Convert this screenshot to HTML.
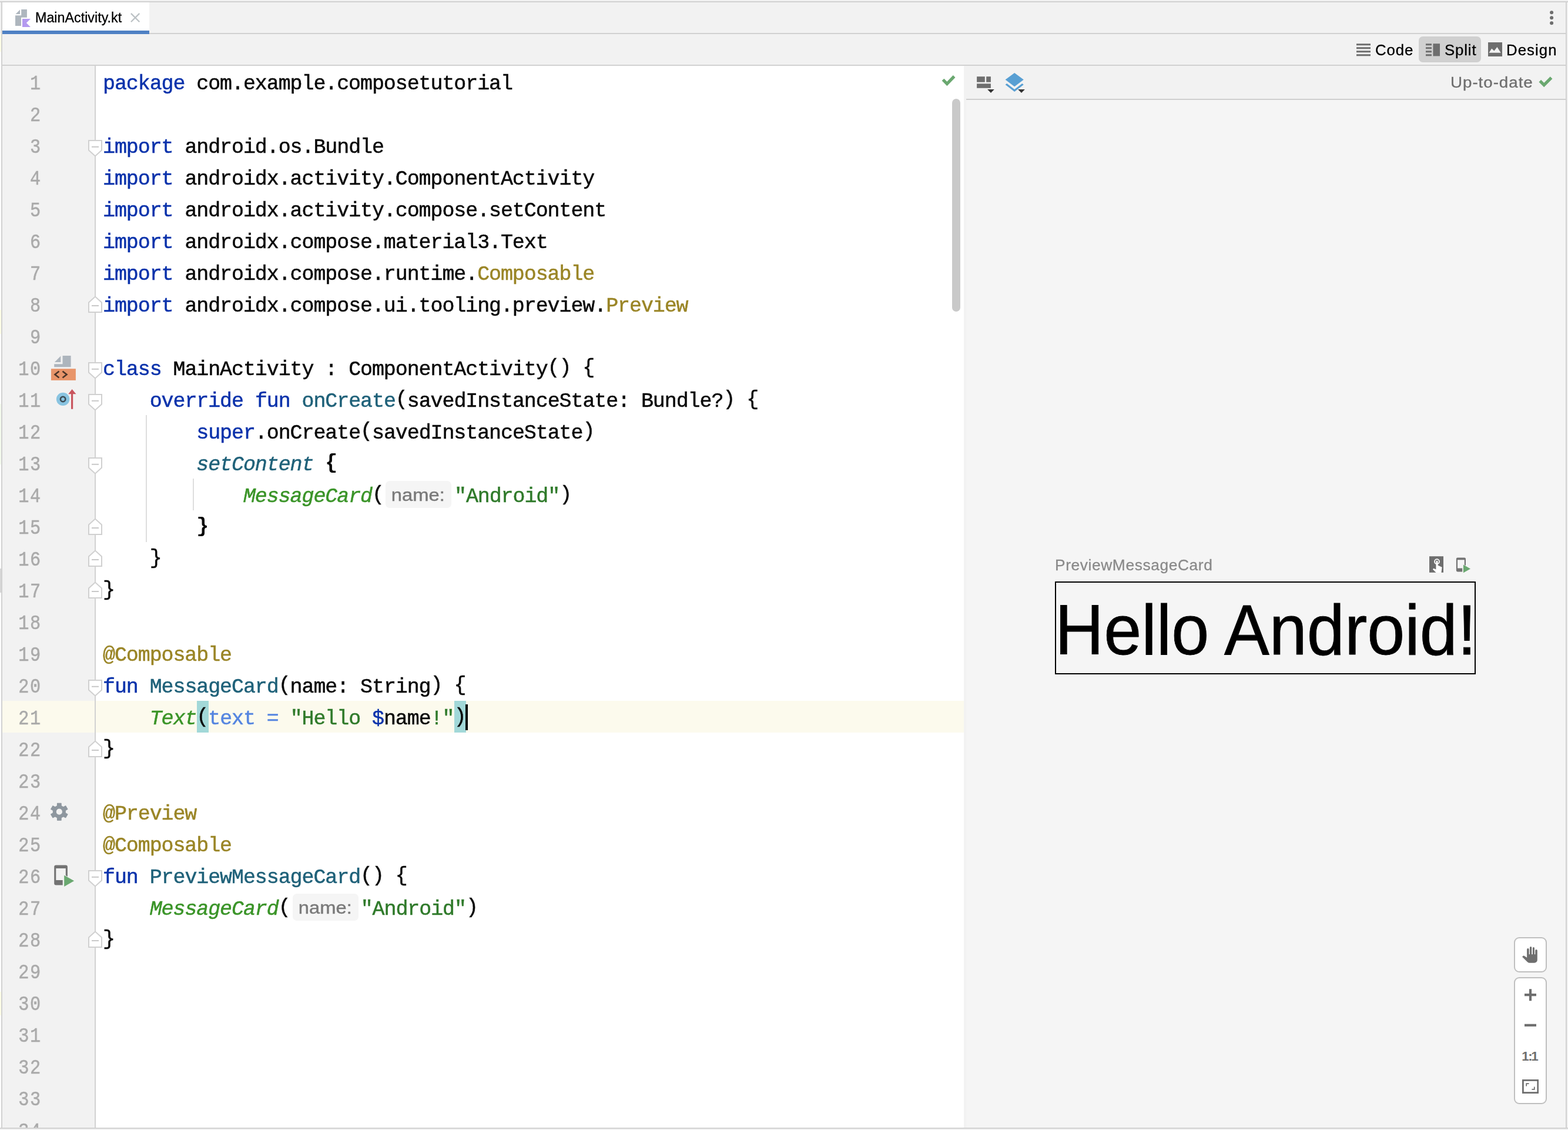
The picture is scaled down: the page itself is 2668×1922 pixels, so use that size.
<!DOCTYPE html>
<html lang="en"><head><meta charset="utf-8"><title>MainActivity.kt</title>
<style>
*{box-sizing:border-box}
html,body{margin:0;padding:0}
html{width:2668px;height:1922px;overflow:hidden;background:#f2f2f2}
body{width:2668px;height:1922px;position:relative;overflow:hidden;background:#f2f2f2;font-family:"Liberation Sans",sans-serif;color:#000}
#root{position:absolute;left:0;top:0;width:2668px;height:1922px;overflow:hidden;background:#f2f2f2}
.abs{position:absolute}
.ln{position:absolute;left:0;width:71px;height:54px;line-height:54px;text-align:right;font-family:"Liberation Mono",monospace;font-size:35.0px;letter-spacing:2.148px;transform:scaleX(0.86);transform-origin:100% 50%;color:#a9a9a9;white-space:pre;-webkit-text-stroke:0.5px currentColor}
.cl{position:absolute;left:175.45px;height:54px;line-height:54px;font-family:"Liberation Mono",monospace;font-size:35.0px;letter-spacing:-1.093px;color:#080808;white-space:pre;-webkit-text-stroke:0.5px currentColor}
.cl,.ln,.ui,.hb{will-change:transform}
.k{color:#0a32ab}
.f{color:#1f6179}
.a{color:#9a8526}
.s{color:#2f7a2a}
.c{color:#3a9428}
.n{color:#5585e0}
.i{font-style:italic}
.b{font-weight:bold;-webkit-text-stroke:0}
.m{}
.p{position:relative;top:-2.6px}
.hint{display:inline-block;width:120.1px;height:54px;vertical-align:top;position:relative;letter-spacing:0;-webkit-text-stroke:0}
.hbg{position:absolute;left:2.9px;top:0.21px;width:111.8px;height:46px;border-radius:7px;background:#f5f5f5}
.hb{position:absolute;left:2.9px;top:1.01px;width:111.8px;height:46px;color:#7a7a7a;font-family:"Liberation Sans",sans-serif;font-size:29.9px;line-height:46px;text-align:center;letter-spacing:0;-webkit-text-stroke:0.45px currentColor;transform:translateX(-0.6px) scaleX(1.095)}
.ui{position:absolute;white-space:pre;font-family:"Liberation Sans",sans-serif;-webkit-text-stroke:0.3px currentColor}
</style></head>
<body>
<div id="root">
<!-- tab bar -->
<div class="abs" style="left:4px;top:4px;width:2660px;height:52px;background:#f2f2f2"></div>
<div class="abs" style="left:4px;top:56px;width:2660px;height:2px;background:#d1d1d1"></div>
<div class="abs" style="left:4px;top:4px;width:250px;height:48px;background:#fff"></div>
<div class="abs" style="left:4px;top:52px;width:250px;height:6px;background:#4f81c4"></div>
<!-- toolbar -->
<div class="abs" style="left:4px;top:110px;width:2660px;height:2px;background:#d1d1d1"></div>
<!-- editor -->
<div class="abs" style="left:163px;top:112px;width:1477px;height:1806px;background:#fff"></div>
<div class="abs" style="left:4px;top:1192px;width:1636px;height:54px;background:#fcfaed"></div>
<div class="abs" style="left:161px;top:112px;width:2px;height:1806px;background:#d2d2d2"></div>
<!-- preview -->
<div class="abs" style="left:1644px;top:170px;width:1020px;height:1748px;background:#f5f5f5"></div>
<div class="abs" style="left:1644px;top:168px;width:1020px;height:2px;background:#cfcfcf"></div>
<div class="abs" style="left:248px;top:706px;width:2px;height:216px;background:#dedede"></div>
<div class="abs" style="left:328px;top:814px;width:2px;height:54px;background:#dedede"></div>
<div class="abs" style="left:335.03px;top:1192px;width:19.91px;height:54px;background:#a2d8d8"></div>
<div class="abs" style="left:773.05px;top:1192px;width:19.91px;height:54px;background:#a2d8d8"></div>
<!-- code -->
<div class="ln" style="top:115.69px">1</div><div class="cl" style="top:115.69px"><span class="k">package</span> com.example.composetutorial</div>
<div class="ln" style="top:169.69px">2</div>
<div class="ln" style="top:223.69px">3</div><div class="cl" style="top:223.69px"><span class="k">import</span> android.os.Bundle</div>
<div class="ln" style="top:277.69px">4</div><div class="cl" style="top:277.69px"><span class="k">import</span> androidx.activity.ComponentActivity</div>
<div class="ln" style="top:331.69px">5</div><div class="cl" style="top:331.69px"><span class="k">import</span> androidx.activity.compose.setContent</div>
<div class="ln" style="top:385.69px">6</div><div class="cl" style="top:385.69px"><span class="k">import</span> androidx.compose.material3.Text</div>
<div class="ln" style="top:439.69px">7</div><div class="cl" style="top:439.69px"><span class="k">import</span> androidx.compose.runtime.<span class="a">Composable</span></div>
<div class="ln" style="top:493.69px">8</div><div class="cl" style="top:493.69px"><span class="k">import</span> androidx.compose.ui.tooling.preview.<span class="a">Preview</span></div>
<div class="ln" style="top:547.69px">9</div>
<div class="ln" style="top:601.69px">10</div><div class="cl" style="top:601.69px"><span class="k">class</span> MainActivity : ComponentActivity<span class="p">()</span> <span class="p">{</span></div>
<div class="ln" style="top:655.69px">11</div><div class="cl" style="top:655.69px">    <span class="k">override</span> <span class="k">fun</span> <span class="f">onCreate</span><span class="p">(</span>savedInstanceState: Bundle?<span class="p">)</span> <span class="p">{</span></div>
<div class="ln" style="top:709.69px">12</div><div class="cl" style="top:709.69px">        <span class="k">super</span>.onCreate<span class="p">(</span>savedInstanceState<span class="p">)</span></div>
<div class="ln" style="top:763.69px">13</div><div class="cl" style="top:763.69px">        <span class="f i">setContent</span> <span class="b"><span class="p">{</span></span></div>
<div class="ln" style="top:817.69px">14</div><div class="cl" style="top:817.69px">            <span class="c i">MessageCard</span><span class="p">(</span><span class="hint"><span class="hbg"></span><span class="hb">name:</span></span><span class="s">"Android"</span><span class="p">)</span></div>
<div class="ln" style="top:871.69px">15</div><div class="cl" style="top:871.69px">        <span class="b"><span class="p">}</span></span></div>
<div class="ln" style="top:925.69px">16</div><div class="cl" style="top:925.69px">    <span class="p">}</span></div>
<div class="ln" style="top:979.69px">17</div><div class="cl" style="top:979.69px"><span class="p">}</span></div>
<div class="ln" style="top:1033.69px">18</div>
<div class="ln" style="top:1087.69px">19</div><div class="cl" style="top:1087.69px"><span class="a">@Composable</span></div>
<div class="ln" style="top:1141.69px">20</div><div class="cl" style="top:1141.69px"><span class="k">fun</span> <span class="f">MessageCard</span><span class="p">(</span>name: String<span class="p">)</span> <span class="p">{</span></div>
<div class="ln" style="top:1195.69px">21</div><div class="cl" style="top:1195.69px">    <span class="c i">Text</span><span class="m"><span class="p">(</span></span><span class="n">text =</span> <span class="s">"Hello </span><span class="k">$</span>name<span class="s">!"</span><span class="m"><span class="p">)</span></span></div>
<div class="ln" style="top:1249.69px">22</div><div class="cl" style="top:1249.69px"><span class="p">}</span></div>
<div class="ln" style="top:1303.69px">23</div>
<div class="ln" style="top:1357.69px">24</div><div class="cl" style="top:1357.69px"><span class="a">@Preview</span></div>
<div class="ln" style="top:1411.69px">25</div><div class="cl" style="top:1411.69px"><span class="a">@Composable</span></div>
<div class="ln" style="top:1465.69px">26</div><div class="cl" style="top:1465.69px"><span class="k">fun</span> <span class="f">PreviewMessageCard</span><span class="p">()</span> <span class="p">{</span></div>
<div class="ln" style="top:1519.69px">27</div><div class="cl" style="top:1519.69px">    <span class="c i">MessageCard</span><span class="p">(</span><span class="hint" style="left:2px"><span class="hbg"></span><span class="hb">name:</span></span><span class="s">"Android"</span><span class="p">)</span></div>
<div class="ln" style="top:1573.69px">28</div><div class="cl" style="top:1573.69px"><span class="p">}</span></div>
<div class="ln" style="top:1627.69px">29</div>
<div class="ln" style="top:1681.69px">30</div>
<div class="ln" style="top:1735.69px">31</div>
<div class="ln" style="top:1789.69px">32</div>
<div class="ln" style="top:1843.69px">33</div>
<div class="ln" style="top:1897.69px">34</div>
<div class="abs" style="left:792px;top:1198px;width:4px;height:44px;background:#000"></div>
<svg class="abs" style="left:149px;top:237px" width="26" height="30" viewBox="0 0 26 30"><path d="M2 2H24V18.5L13 28.5L2 18.5Z" fill="#fff" stroke="#d0d0d0" stroke-width="2"/><path d="M7 12.8H19" stroke="#c8c8c8" stroke-width="2"/></svg>
<svg class="abs" style="left:149px;top:615px" width="26" height="30" viewBox="0 0 26 30"><path d="M2 2H24V18.5L13 28.5L2 18.5Z" fill="#fff" stroke="#d0d0d0" stroke-width="2"/><path d="M7 12.8H19" stroke="#c8c8c8" stroke-width="2"/></svg>
<svg class="abs" style="left:149px;top:669px" width="26" height="30" viewBox="0 0 26 30"><path d="M2 2H24V18.5L13 28.5L2 18.5Z" fill="#fff" stroke="#d0d0d0" stroke-width="2"/><path d="M7 12.8H19" stroke="#c8c8c8" stroke-width="2"/></svg>
<svg class="abs" style="left:149px;top:777px" width="26" height="30" viewBox="0 0 26 30"><path d="M2 2H24V18.5L13 28.5L2 18.5Z" fill="#fff" stroke="#d0d0d0" stroke-width="2"/><path d="M7 12.8H19" stroke="#c8c8c8" stroke-width="2"/></svg>
<svg class="abs" style="left:149px;top:1155px" width="26" height="30" viewBox="0 0 26 30"><path d="M2 2H24V18.5L13 28.5L2 18.5Z" fill="#fff" stroke="#d0d0d0" stroke-width="2"/><path d="M7 12.8H19" stroke="#c8c8c8" stroke-width="2"/></svg>
<svg class="abs" style="left:149px;top:1479px" width="26" height="30" viewBox="0 0 26 30"><path d="M2 2H24V18.5L13 28.5L2 18.5Z" fill="#fff" stroke="#d0d0d0" stroke-width="2"/><path d="M7 12.8H19" stroke="#c8c8c8" stroke-width="2"/></svg>
<svg class="abs" style="left:149px;top:503px" width="26" height="30" viewBox="0 0 26 30"><path d="M2 28H24V11.5L13 1.5L2 11.5Z" fill="#fff" stroke="#d0d0d0" stroke-width="2"/><path d="M7 17H19" stroke="#c8c8c8" stroke-width="2"/></svg>
<svg class="abs" style="left:149px;top:881px" width="26" height="30" viewBox="0 0 26 30"><path d="M2 28H24V11.5L13 1.5L2 11.5Z" fill="#fff" stroke="#d0d0d0" stroke-width="2"/><path d="M7 17H19" stroke="#c8c8c8" stroke-width="2"/></svg>
<svg class="abs" style="left:149px;top:935px" width="26" height="30" viewBox="0 0 26 30"><path d="M2 28H24V11.5L13 1.5L2 11.5Z" fill="#fff" stroke="#d0d0d0" stroke-width="2"/><path d="M7 17H19" stroke="#c8c8c8" stroke-width="2"/></svg>
<svg class="abs" style="left:149px;top:989px" width="26" height="30" viewBox="0 0 26 30"><path d="M2 28H24V11.5L13 1.5L2 11.5Z" fill="#fff" stroke="#d0d0d0" stroke-width="2"/><path d="M7 17H19" stroke="#c8c8c8" stroke-width="2"/></svg>
<svg class="abs" style="left:149px;top:1259px" width="26" height="30" viewBox="0 0 26 30"><path d="M2 28H24V11.5L13 1.5L2 11.5Z" fill="#fff" stroke="#d0d0d0" stroke-width="2"/><path d="M7 17H19" stroke="#c8c8c8" stroke-width="2"/></svg>
<svg class="abs" style="left:149px;top:1583px" width="26" height="30" viewBox="0 0 26 30"><path d="M2 28H24V11.5L13 1.5L2 11.5Z" fill="#fff" stroke="#d0d0d0" stroke-width="2"/><path d="M7 17H19" stroke="#c8c8c8" stroke-width="2"/></svg>
<!-- gutter icons -->
<svg class="abs" style="left:86px;top:604px" width="44" height="44" viewBox="0 0 44 44"><path d="M20.5 1H34.6V20.2H6.2V15.2H20.5Z" fill="#adb5bd"/><path d="M17.3 1.6V12H6.9Z" fill="#adb5bd"/><rect x="0.9" y="23.2" width="42" height="19.7" fill="#e8956a"/><path d="M14.5 27.5L7.5 33L14.5 38.5M20.5 27.5L27.5 33L20.5 38.5" fill="none" stroke="#4a3428" stroke-width="2.6"/></svg>
<svg class="abs" style="left:94px;top:660px" width="38" height="38" viewBox="0 0 38 38"><circle cx="13.1" cy="18.9" r="11.2" fill="#89c4e1"/><circle cx="13.1" cy="18.9" r="4.2" fill="none" stroke="#3d4b54" stroke-width="2.6"/><path d="M28.6 2.1L35.5 10.2H30.2V35.8H27V10.2H22.2Z" fill="#c9555e"/></svg>
<svg class="abs" style="left:84px;top:1364px" width="34" height="34" viewBox="0 0 34 34"><path d="M13.42 6.65L13.57 2.26L20.03 2.26L20.18 6.65L23.81 8.75L27.69 6.68L30.92 12.27L27.19 14.60L27.19 18.80L30.92 21.13L27.69 26.72L23.81 24.65L20.18 26.75L20.03 31.14L13.57 31.14L13.42 26.75L9.79 24.65L5.91 26.72L2.68 21.13L6.41 18.80L6.41 14.60L2.68 12.27L5.91 6.68L9.79 8.75ZM11.10 16.70a5.7 5.7 0 1 0 11.4 0a5.7 5.7 0 1 0 -11.4 0Z" fill="#8e979f" fill-rule="evenodd" stroke="#8e979f" stroke-width="1.2" stroke-linejoin="round"/></svg>
<svg class="abs" style="left:91px;top:1471px" width="36.0" height="38.0" viewBox="0 0 36 38"><path d="M4.2 0.6H20.9Q23.9 0.6 23.9 3.6V31.4Q23.9 34.4 20.9 34.4H4.2Q1.2 34.4 1.2 31.4V3.6Q1.2 0.6 4.2 0.6ZM4.3 6.1V25.9H20.8V6.1Z" fill="#737373" fill-rule="evenodd"/><path d="M15.7 15.3L37 27.3L15.7 39.5Z" fill="#f2f2f2"/><path d="M18.2 17.7L35.1 27.3L18.2 37Z" fill="#6aa870"/></svg>
<!-- tab -->
<svg class="abs" style="left:24px;top:14px" width="30" height="34" viewBox="0 0 30 34"><path d="M12.2 2H21.9V15.8H12V30H2V12.2H12.2Z" fill="#aeb6be"/><path d="M10 2.6V9.9H2.6Z" fill="#aeb6be"/><path d="M14 18H28L20.9 25L28 32H14Z" fill="#b49af0"/></svg>
<div class="ui" style="left:60.1px;top:14.8px;font-size:23.3px;line-height:30px">MainActivity.kt</div>
<svg class="abs" style="left:220px;top:20px" width="20" height="20" viewBox="0 0 20 20"><path d="M2.9 2.9L17.3 17.3M17.3 2.9L2.9 17.3" stroke="#bcc2c5" stroke-width="2.3" fill="none"/></svg>
<svg class="abs" style="left:2634px;top:16px" width="12" height="28" viewBox="0 0 12 28"><circle cx="6.1" cy="5.2" r="3" fill="#6e6e6e"/><circle cx="6.1" cy="14.2" r="3" fill="#6e6e6e"/><circle cx="6.1" cy="23.2" r="3" fill="#6e6e6e"/></svg>
<!-- view mode -->
<div class="abs" style="left:2414px;top:62px;width:106px;height:44px;border-radius:7px;background:#d0d0d0"></div>
<svg class="abs" style="left:2308px;top:74px" width="24" height="22" viewBox="0 0 24 22"><path d="M0 1.7H24M0 7.7H24M0 13.8H24M0 19.8H24" stroke="#6e6e6e" stroke-width="3"/></svg>
<div class="ui" style="left:2340.4px;top:68.3px;font-size:25.8px;line-height:34px;letter-spacing:0.9px">Code</div>
<svg class="abs" style="left:2426px;top:74px" width="24" height="22" viewBox="0 0 24 22"><path d="M0 1.7H10M0 7.7H10M0 13.8H10M0 19.8H10" stroke="#6e6e6e" stroke-width="3"/><rect x="12.4" y="0.2" width="11.6" height="21.2" fill="#6e6e6e"/></svg>
<div class="ui" style="left:2458px;top:68.3px;font-size:25.8px;line-height:34px;letter-spacing:0.85px">Split</div>
<svg class="abs" style="left:2532px;top:72px" width="24" height="24" viewBox="0 0 24 24"><path d="M0 0H24V24H0ZM1.6 17.8L6.2 10.4L10.4 14.6L15.4 7.9L21.7 17.8Z" fill="#6e6e6e" fill-rule="evenodd"/></svg>
<div class="ui" style="left:2563.2px;top:68.3px;font-size:25.8px;line-height:34px;letter-spacing:1.05px">Design</div>
<svg class="abs" style="left:1600px;top:126px" width="28" height="22" viewBox="0 0 28 22"><path d="M4.5 9.5L11.4 16.5L23.6 3.9" fill="none" stroke="#6aa870" stroke-width="5.2"/></svg>
<div class="abs" style="left:1620px;top:168px;width:14px;height:362px;border-radius:7px;background:#c9c9c9"></div>
<!-- preview toolbar -->
<svg class="abs" style="left:1660px;top:128px" width="34" height="32" viewBox="0 0 34 32"><rect x="2.1" y="2.2" width="13.7" height="9.5" fill="#6e6e6e"/><rect x="18.2" y="2.2" width="7.7" height="9.5" fill="#6e6e6e"/><rect x="2.1" y="14.3" width="23.8" height="7.5" fill="#6e6e6e"/><path d="M20.1 24H31.8L26 30Z" fill="#333"/></svg>
<svg class="abs" style="left:1708px;top:122px" width="38" height="38" viewBox="0 0 38 38"><path d="M18.2 2L33.8 13.6L18.2 25.2L2.6 13.6Z" fill="#589fd3"/><path d="M2.6 22L5.2 20.1L18.2 29.9L31.2 20.1L33.8 22L18.2 34Z" fill="#589fd3"/><path d="M24.1 30H35.9L30 36Z" fill="#333"/></svg>
<div class="ui" style="left:2467.9px;top:122.3px;font-size:26.2px;line-height:36px;letter-spacing:0.9px;color:#6e6e6e;transform:scaleX(1.06);transform-origin:0 50%">Up-to-date</div>
<svg class="abs" style="left:2616px;top:128px" width="28" height="22" viewBox="0 0 28 22"><path d="M4.3 9.7L11.2 16.5L23.6 4.1" fill="none" stroke="#6aa870" stroke-width="5.2"/></svg>
<!-- preview content -->
<div class="ui" style="left:1794.6px;top:942.6px;font-size:26.3px;line-height:36px;letter-spacing:0.62px;color:#8a8a8a">PreviewMessageCard</div>
<svg class="abs" style="left:2432px;top:946px" width="24" height="28" viewBox="0 0 24 28"><rect x="0" y="0.2" width="24" height="27.6" fill="#6e6e6e"/><circle cx="13" cy="9.2" r="4" fill="none" stroke="#fff" stroke-width="1.8"/><path d="M11.4 9.4Q11.4 7.6 13 7.6Q14.6 7.6 14.6 9.4V15.4L21.6 18.8L20.4 28H11.6L5.8 22.2L7.4 20.8L11.4 22.4Z" fill="#fff"/></svg>
<svg class="abs" style="left:2477.4px;top:947.6px" width="25.6" height="27.0" viewBox="0 0 36 38"><path d="M4.2 0.6H20.9Q23.9 0.6 23.9 3.6V31.4Q23.9 34.4 20.9 34.4H4.2Q1.2 34.4 1.2 31.4V3.6Q1.2 0.6 4.2 0.6ZM4.3 6.1V25.9H20.8V6.1Z" fill="#737373" fill-rule="evenodd"/><path d="M15.7 15.3L37 27.3L15.7 39.5Z" fill="#f2f2f2"/><path d="M18.2 17.7L35.1 27.3L18.2 37Z" fill="#6aa870"/></svg>
<div class="abs" style="left:1795px;top:989px;width:716px;height:158px;border:2px solid #000"></div>
<div class="ui" style="left:1795.2px;top:1006px;font-size:115.15px;line-height:130px;transform:scaleY(1.044);transform-origin:0 50%;-webkit-text-stroke:0.8px #000;filter:blur(0.7px)">Hello Android!</div>
<!-- zoom controls -->
<div class="abs" style="left:2576px;top:1594px;width:56px;height:59.5px;border:2px solid #bfbfbf;border-radius:9px;background:#fff"></div>
<div class="abs" style="left:2576px;top:1662px;width:56px;height:215.5px;border:2px solid #bfbfbf;border-radius:9px;background:#fff"></div>
<svg class="abs" style="left:2588px;top:1608px" width="32" height="32" viewBox="0 0 32 32"><path d="M10.1 6.9a1.8 1.8 0 0 1 3.6 0V15.2H15V3.7a1.6 1.6 0 0 1 3.2 0V15.2H19.9V4.6a1.5 1.5 0 0 1 3 0V15.2H24.2V8.7a1.8 1.8 0 0 1 3.6 0V24.8a5 5 0 0 1 -5 5H15Q12.6 29.8 11 28.2L2.1 19.4L3.4 17.9Q4.3 17 5.4 17.7L10.1 20.8Z" fill="#6e6e6e"/></svg>
<svg class="abs" style="left:2592px;top:1680px" width="24" height="24" viewBox="0 0 24 24"><path d="M2 12.2H22M12 2.2V22.2" stroke="#6e6e6e" stroke-width="4.2"/></svg>
<svg class="abs" style="left:2592px;top:1732px" width="24" height="24" viewBox="0 0 24 24"><path d="M2 11.8H22" stroke="#6e6e6e" stroke-width="4.2"/></svg>
<svg class="abs" style="left:2584px;top:1780px" width="40" height="32" viewBox="0 0 40 32"><text x="5.2 16.2 21.2" y="24" font-family="Liberation Sans, sans-serif" font-weight="bold" font-size="22.4" fill="#6e6e6e">1:1</text></svg>
<svg class="abs" style="left:2590px;top:1836px" width="28" height="24" viewBox="0 0 28 24"><rect x="1.4" y="1.4" width="25.4" height="21.2" fill="none" stroke="#6e6e6e" stroke-width="2.8"/><path d="M7.2 11.6V7.2H11.6M16.4 16.8H20.8V12.4" fill="none" stroke="#6e6e6e" stroke-width="1.8"/></svg>
<!-- frame -->
<div class="abs" style="left:0;top:0;width:2px;height:1922px;background:#fff"></div>
<div class="abs" style="left:0;top:0;width:2px;height:57px;background:#f2f2f2"></div>
<div class="abs" style="left:0;top:58px;width:2px;height:30px;background:#fffde6"></div>
<div class="abs" style="left:0;top:687px;width:2px;height:103px;background:#f3faec"></div>
<div class="abs" style="left:0;top:527px;width:2px;height:41px;background:#fffde6"></div>
<div class="abs" style="left:0;top:967px;width:2px;height:41px;background:#d6d6d6"></div>
<div class="abs" style="left:0;top:1687px;width:2px;height:40px;background:#fffde6"></div>
<div class="abs" style="left:0;top:1920px;width:2668px;height:2px;background:#f3f3f3"></div>
<div class="abs" style="left:0;top:2px;width:2668px;height:2px;background:#d1d1d1"></div>
<div class="abs" style="left:0;top:1918px;width:2668px;height:2px;background:#d1d1d1"></div>
<div class="abs" style="left:2px;top:4px;width:2px;height:1914px;background:#d1d1d1"></div>
<div class="abs" style="left:2664px;top:4px;width:2px;height:1914px;background:#d1d1d1"></div>
</div>
</body></html>
